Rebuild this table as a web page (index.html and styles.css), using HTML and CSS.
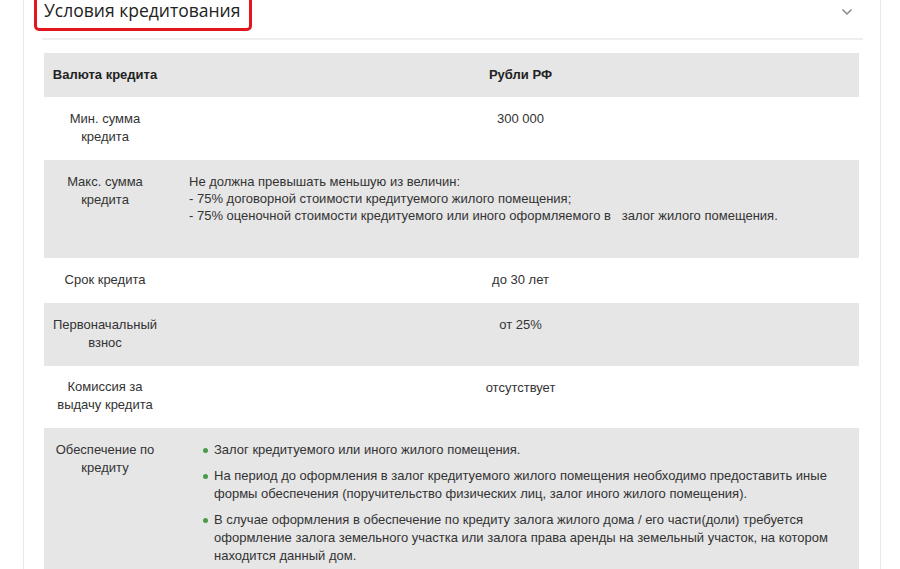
FILE: index.html
```html
<!DOCTYPE html>
<html lang="ru">
<head>
    <meta charset="UTF-8">
    <title>Условия кредитования</title>
    <link rel="stylesheet" href="styles.css">
</head>
<body>

<div class="card">
    <div class="card-head">
        <h2 class="card-title">Условия кредитования</h2>
        <svg class="chevron" width="12" height="8" viewBox="0 0 12 8">
            <path d="M1.5 1.5 L6 6 L10.5 1.5" fill="none" stroke="#8a8a8a" stroke-width="1.5"/>
        </svg>
    </div>

    <table class="terms">
        <tbody>
            <tr class="gray">
                <th>Валюта кредита</th>
                <th class="val">Рубли РФ</th>
            </tr>
            <tr>
                <td class="name">Мин. сумма кредита</td>
                <td class="val">300 000</td>
            </tr>
            <tr class="gray">
                <td class="name">Макс. сумма кредита</td>
                <td class="val left tall">
                    Не должна превышать меньшую из величин:<br>
                    - 75% договорной стоимости кредитуемого жилого помещения;<br>
                    - 75% оценочной стоимости кредитуемого или иного оформляемого в &nbsp; залог жилого помещения.
                </td>
            </tr>
            <tr>
                <td class="name">Срок кредита</td>
                <td class="val">до 30 лет</td>
            </tr>
            <tr class="gray">
                <td class="name">Первоначальный взнос</td>
                <td class="val">от 25%</td>
            </tr>
            <tr>
                <td class="name short">Комиссия за выдачу кредита</td>
                <td class="val">отсутствует</td>
            </tr>
            <tr class="gray">
                <td class="name">Обеспечение по кредиту</td>
                <td class="val left">
                    <ul class="dots">
                        <li>Залог кредитуемого или иного жилого помещения.</li>
                        <li>На период до оформления в залог кредитуемого жилого помещения необходимо предоставить иные формы обеспечения (поручительство физических лиц, залог иного жилого помещения).</li>
                        <li>В случае оформления в обеспечение по кредиту залога жилого дома / его части(доли) требуется оформление залога земельного участка или залога права аренды на земельный участок, на котором находится данный дом.</li>
                    </ul>
                </td>
            </tr>
        </tbody>
    </table>
</div>

</body>
</html>
```

FILE: styles.css
```css
body {
    margin: 0;
    padding: 0;
    background-color: #fff;
    font-family: "Liberation Sans", Arial, sans-serif;
    color: #333;
}
.card {
    margin: -14px 0 0 23px;
    width: 815px;
    padding: 0 21px 40px 20px;
    border-left: 1px solid #e8e8e8;
    border-right: 1px solid #e8e8e8;
}
.card-head {
    display: flex;
    justify-content: space-between;
    align-items: flex-start;
    height: 52px;
    margin: 0 -4px 0 -2px;
    padding: 0 10px 0 2px;
    border-bottom: 2px solid #eeeeee;
}
.card-title {
    margin: 0 0 0 -10px;
    padding: 6px 9px 3px 7px;
    border: 3px solid #e3161e;
    border-radius: 5px;
    font-family: "Open Sans", sans-serif;
    font-size: 17.5px;
    font-weight: normal;
    line-height: 30px;
    color: #222;
}
.chevron {
    margin-top: 22px;
}
.terms {
    width: 100%;
    margin-top: 13px;
    border-collapse: collapse;
    font-size: 13px;
    line-height: 18px;
}
.terms tr.gray {
    background-color: #e6e6e6;
}
.terms th,
.terms td {
    padding: 13px 8px 13px 8px;
    text-align: center;
    vertical-align: top;
}
.terms th {
    font-weight: bold;
    color: #222;
}
.terms .name {
    width: 106px;
    padding-bottom: 14px;
}
.terms .name.short {
    padding-top: 12px;
}
.terms .val {
    padding-left: 23px;
    padding-right: 7px;
}
.terms .left {
    text-align: left;
}
.terms .tall {
    line-height: 17px;
    padding-bottom: 34px;
}
.dots {
    margin: 0;
    padding: 0;
    list-style: none;
}
.dots li {
    position: relative;
    padding-left: 25px;
    margin-bottom: 8px;
}
.dots li::before {
    content: "";
    position: absolute;
    left: 14px;
    top: 7px;
    width: 5px;
    height: 5px;
    border-radius: 50%;
    background-color: #4a9b4a;
}
```
